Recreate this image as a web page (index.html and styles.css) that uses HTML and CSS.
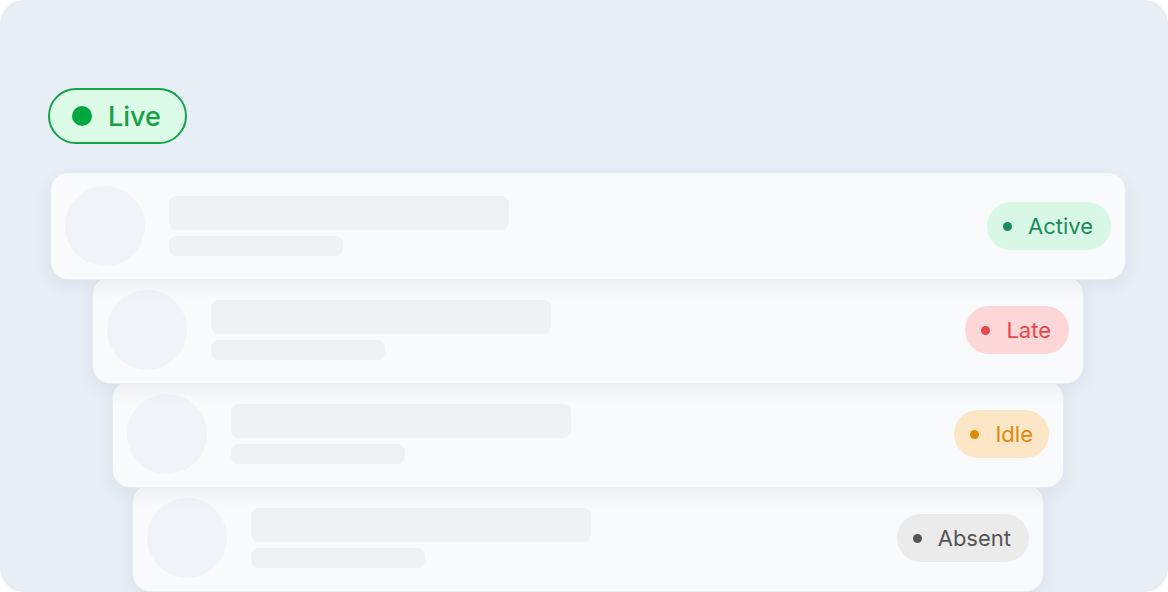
FILE: index.html
```html
<!DOCTYPE html>
<html lang="en">
<head>
  <meta charset="UTF-8">
  <title>Live status</title>
  <link rel="stylesheet" href="styles.css">
</head>
<body>

  <div class="panel">
    <div class="live">
      <span class="live-dot"></span>
      <span>Live</span>
    </div>

    <div class="stack">
      <div class="card card-1">
        <div class="avatar"></div>
        <div class="lines">
          <div class="line line-long"></div>
          <div class="line line-short"></div>
        </div>
        <div class="badge badge-active"><span class="dot"></span>Active</div>
      </div>

      <div class="card card-2">
        <div class="avatar"></div>
        <div class="lines">
          <div class="line line-long"></div>
          <div class="line line-short"></div>
        </div>
        <div class="badge badge-late"><span class="dot"></span>Late</div>
      </div>

      <div class="card card-3">
        <div class="avatar"></div>
        <div class="lines">
          <div class="line line-long"></div>
          <div class="line line-short"></div>
        </div>
        <div class="badge badge-idle"><span class="dot"></span>Idle</div>
      </div>

      <div class="card card-4">
        <div class="avatar"></div>
        <div class="lines">
          <div class="line line-long"></div>
          <div class="line line-short"></div>
        </div>
        <div class="badge badge-absent"><span class="dot"></span>Absent</div>
      </div>
    </div>
  </div>

</body>
</html>
```

FILE: styles.css
```css
body {
  margin: 0;
  background: #ffffff;
  font-family: Inter, 'Noto Sans', sans-serif;
}

.panel {
  width: 1168px;
  height: 592px;
  box-sizing: border-box;
  padding: 88px 40px 0 48px;
  background: #e8eef6;
  border-radius: 24px;
  overflow: hidden;
}

.live {
  display: inline-flex;
  align-items: center;
  gap: 16px;
  height: 56px;
  box-sizing: border-box;
  padding: 0 24px 0 22px;
  border: 2px solid #16a34a;
  border-radius: 28px;
  background: #dcfce7;
  color: #15a045;
  font-size: 27px;
  font-weight: 500;
}

.live-dot {
  width: 20px;
  height: 20px;
  border-radius: 50%;
  background: #00a63e;
}

.stack {
  display: flex;
  flex-direction: column;
  align-items: center;
  margin-top: 28px;
}

.card {
  display: flex;
  align-items: center;
  height: 108px;
  box-sizing: border-box;
  padding: 0 14px;
  background: #f8fafc;
  border: 1px solid #e6ebf2;
  border-radius: 18px;
  box-shadow: 0 6px 18px rgba(30, 41, 59, 0.06);
  position: relative;
}

.card + .card {
  margin-top: -4px;
}

.card-1 { width: 1076px; z-index: 4; }
.card-2 { width: 992px; z-index: 3; }
.card-3 { width: 952px; z-index: 2; }
.card-4 { width: 912px; z-index: 1; }

.avatar {
  width: 80px;
  height: 80px;
  border-radius: 50%;
  background: #f0f3f7;
  flex-shrink: 0;
}

.lines {
  display: flex;
  flex-direction: column;
  gap: 6px;
  margin-left: 24px;
}

.line {
  background: #eef2f5;
  border-radius: 8px;
}

.line-long {
  width: 340px;
  height: 34px;
}

.line-short {
  width: 174px;
  height: 20px;
}

.badge {
  display: inline-flex;
  align-items: center;
  gap: 16px;
  height: 48px;
  margin-left: auto;
  padding: 0 18px 0 16px;
  border-radius: 24px;
  font-size: 22px;
}

.dot {
  width: 9px;
  height: 9px;
  border-radius: 50%;
  background: currentColor;
}

.badge-active {
  background: #d8f7e7;
  color: #1c8a5a;
}

.badge-late {
  background: #fdd6d7;
  color: #e5484d;
}

.badge-idle {
  background: #fde6c6;
  color: #e08a0b;
  padding-right: 16px;
}

.badge-absent {
  background: #ebebeb;
  color: #555555;
}
```
